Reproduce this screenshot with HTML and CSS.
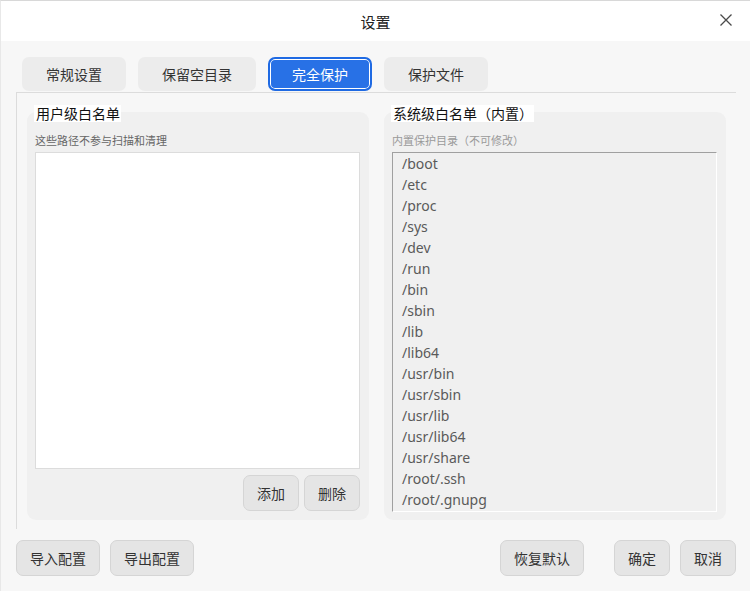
FILE: index.html
```html
<!DOCTYPE html>
<html lang="zh-CN">
<head>
<meta charset="utf-8">
<title>设置</title>
<link rel="stylesheet" href="styles.css">
</head>
<body>
<div class="window">
  <div class="titlebar">
    <span></span>
    <span class="title">设置</span>
    <span class="close">
      <svg width="14" height="14" viewBox="0 0 14 14"><path d="M1.5 1.5 L12.5 12.5 M12.5 1.5 L1.5 12.5" stroke="#4a4a4a" stroke-width="1.3" fill="none"/></svg>
    </span>
  </div>
  <div class="content">
    <div class="tabs">
      <div class="tab">常规设置</div>
      <div class="tab">保留空目录</div>
      <div class="tab active">完全保护</div>
      <div class="tab">保护文件</div>
    </div>
    <div class="pane">
      <div class="group">
        <div class="group-title">用户级白名单</div>
        <div class="subtitle">这些路径不参与扫描和清理</div>
        <div class="user-list"></div>
        <div class="group-actions">
          <button class="btn">添加</button>
          <button class="btn">删除</button>
        </div>
      </div>
      <div class="group">
        <div class="group-title">系统级白名单（内置）</div>
        <div class="subtitle disabled">内置保护目录（不可修改）</div>
        <div class="sys-list">
          <div class="item">/boot</div>
          <div class="item">/etc</div>
          <div class="item">/proc</div>
          <div class="item">/sys</div>
          <div class="item">/dev</div>
          <div class="item">/run</div>
          <div class="item">/bin</div>
          <div class="item">/sbin</div>
          <div class="item">/lib</div>
          <div class="item">/lib64</div>
          <div class="item">/usr/bin</div>
          <div class="item">/usr/sbin</div>
          <div class="item">/usr/lib</div>
          <div class="item">/usr/lib64</div>
          <div class="item">/usr/share</div>
          <div class="item">/root/.ssh</div>
          <div class="item">/root/.gnupg</div>
        </div>
      </div>
    </div>
    <div class="footer">
      <button class="btn">导入配置</button>
      <button class="btn">导出配置</button>
      <span class="spacer"></span>
      <button class="btn">恢复默认</button>
      <button class="btn ok">确定</button>
      <button class="btn">取消</button>
    </div>
  </div>
</div>
</body>
</html>
```
FILE: styles.css
```css
* { box-sizing: border-box; }
html, body { margin: 0; padding: 0; }
body {
  font-family: "Noto Sans", "Noto Sans CJK SC", sans-serif;
  color: #222;
  background: #f7f7f7;
}
.window {
  width: 750px;
  height: 591px;
  display: flex;
  flex-direction: column;
  border-top: 1px solid #d8d8d8;
  border-left: 1px solid #e8e8e8;
  overflow: hidden;
}
.titlebar {
  height: 40px;
  background: #fff;
  display: grid;
  grid-template-columns: 1fr auto 1fr;
  align-items: center;
}
.title {
  font-size: 15px;
  color: #222;
  font-family: "Noto Sans CJK SC", sans-serif;
}
.close {
  justify-self: end;
  margin-right: 17px;
  display: flex;
  margin-top: -2px;
}
.content {
  flex: 1;
  background: #f7f7f7;
  display: flex;
  flex-direction: column;
  padding: 16px 14px 15px 15px;
}
.tabs {
  display: flex;
  gap: 12px;
  padding-left: 6px;
  height: 34px;
}
.tab {
  height: 34px;
  padding: 0 24px;
  background: #ececec;
  border-radius: 7px;
  font-size: 14px;
  color: #333;
  display: flex;
  align-items: center;
  font-family: "Noto Sans CJK SC", sans-serif;
}
.tab.active {
  background: #2871e6;
  color: #fff;
  border: 2px solid #1f6ae3;
  box-shadow: inset 0 0 0 1px #fff;
  padding: 0 22px;
}
.pane {
  flex: 1;
  margin-top: 1px;
  border-top: 1px solid #dcdcdc;
  border-left: 1px solid #dcdcdc;
  padding: 19px 10px 9px 10px;
  display: flex;
  gap: 15px;
}
.group {
  flex: 1;
  background: #f0f0f0;
  border-radius: 9px;
  display: flex;
  flex-direction: column;
  padding: 0 9px 9px 8px;
}
.group-title {
  align-self: flex-start;
  margin: -7px 0 0 -1px;
  background: #fff;
  padding: 0 1px 0 2px;
  height: 17px;
  line-height: 17px;
  font-size: 14px;
  color: #111;
  font-family: "Noto Sans CJK SC", sans-serif;
}
.subtitle {
  margin-top: 10px;
  font-size: 11px;
  line-height: 16px;
  height: 16px;
  color: #666;
  font-family: "Noto Sans CJK SC", sans-serif;
}
.subtitle.disabled { color: #9a9a9a; }
.user-list {
  margin-top: 4px;
  flex: 1;
  background: #fff;
  border: 1px solid #dcdcdc;
}
.group-actions {
  margin-top: 6px;
  display: flex;
  justify-content: flex-end;
  gap: 5px;
}
.btn {
  height: 36px;
  padding: 0 13px;
  background: #e5e5e5;
  border: 1px solid #d5d5d5;
  border-radius: 7px;
  font-size: 14px;
  color: #333;
  font-family: "Noto Sans CJK SC", sans-serif;
  cursor: default;
}
.sys-list {
  margin-top: 4px;
  margin-bottom: -1px;
  flex: 1;
  background: #f0f0f0;
  border-top: 1px solid #a0a0a0;
  border-left: 1px solid #a0a0a0;
  border-right: 1px solid #fff;
  border-bottom: 1px solid #fff;
  padding: 0 9px 0 9px;
  overflow: hidden;
}
.item {
  font-size: 14px;
  line-height: 21px;
  height: 21px;
  color: #5a5a5a;
  font-family: "Noto Sans", sans-serif;
}
.footer {
  margin-top: 11px;
  display: flex;
  gap: 10px;
}
.spacer { flex: 1; }
.btn.ok { margin-left: 20px; }
```
